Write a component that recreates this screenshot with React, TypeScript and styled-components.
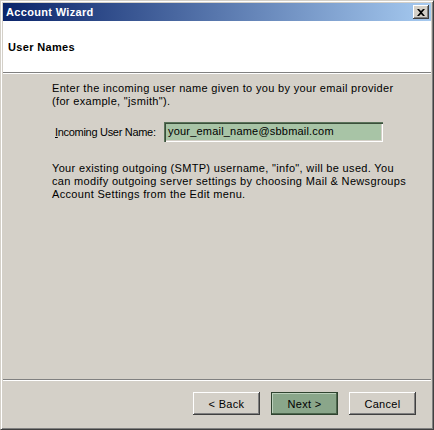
import React from 'react';
import styled, { createGlobalStyle, css } from 'styled-components';

const GlobalStyle = createGlobalStyle`
  html, body {
    margin: 0;
    padding: 0;
    background: #d4d0c8;
  }
  body {
    font-family: Tahoma, "Liberation Sans", "DejaVu Sans", sans-serif;
    font-size: 11px;
    letter-spacing: 0.33px;
    color: #000000;
    -webkit-font-smoothing: none;
  }
`;

const Window = styled.div`
  width: 434px;
  height: 430px;
  box-sizing: border-box;
  display: flex;
  flex-direction: column;
  background: #d4d0c8;
  border-top: 1px solid #d4d0c8;
  border-left: 1px solid #d4d0c8;
  border-right: 1px solid #404040;
  border-bottom: 1px solid #404040;
  box-shadow: inset 1px 1px 0 #ffffff, inset -1px -1px 0 #808080;
  padding: 2px;
`;

const TitleBar = styled.div`
  height: 18px;
  display: flex;
  align-items: center;
  justify-content: space-between;
  padding: 0 2px 0 3px;
  background: linear-gradient(to right, #0a246a, #a6caf0);
  color: #ffffff;
  font-weight: bold;
  font-size: 11px;
`;

const CloseButton = styled.button`
  width: 16px;
  height: 14px;
  padding: 0;
  margin: 0;
  background: #d4d0c8;
  border: none;
  box-shadow: inset -1px -1px 0 #404040, inset 1px 1px 0 #ffffff,
    inset -2px -2px 0 #808080;
  display: flex;
  align-items: center;
  justify-content: center;
`;

const Header = styled.div`
  height: 52px;
  background: #ffffff;
  display: flex;
  align-items: center;
  padding-left: 5px;
  font-weight: bold;
  font-size: 11px;
  border-bottom: 1px solid #808080;
  box-shadow: 0 1px 0 #ffffff;
  box-sizing: border-box;
`;

const Body = styled.div`
  flex: 1;
  padding: 8px 20px 0 49px;
  margin-top: 1px;
`;

const Paragraph = styled.p`
  margin: 0;
  line-height: 13px;
  width: 362px;
`;

const FieldRow = styled.div`
  display: flex;
  align-items: center;
  margin: 14px 0 20px 3px;
`;

const Label = styled.label`
  width: 109px;
  flex-shrink: 0;
  white-space: nowrap;
  letter-spacing: -0.3px;
  u {
    text-decoration: underline;
  }
`;

const TextField = styled.div`
  width: 219px;
  height: 20px;
  flex-shrink: 0;
  box-sizing: border-box;
  background: #a8c4a6;
  padding: 3px 4px 0 4px;
  letter-spacing: 0.2px;
  white-space: nowrap;
  box-shadow: inset 1px 1px 0 #5a735a, inset 2px 2px 0 #3a4f3a,
    inset -1px -1px 0 #ffffff, inset -2px -2px 0 #d4d0c8;
`;

const Footer = styled.div`
  height: 48px;
  border-top: 1px solid #808080;
  box-shadow: inset 0 1px 0 #ffffff;
  display: flex;
  justify-content: flex-end;
  align-items: flex-start;
  gap: 11px;
  padding: 12px 15px 0 0;
  box-sizing: border-box;
`;

const Button = styled.button<{ $primary?: boolean }>`
  width: 67px;
  height: 23px;
  font-family: inherit;
  font-size: 11px;
  letter-spacing: inherit;
  color: #000000;
  background: #d4d0c8;
  border: none;
  padding: 0;
  box-shadow: inset -1px -1px 0 #404040, inset 1px 1px 0 #ffffff,
    inset -2px -2px 0 #808080;
  ${(p) =>
    p.$primary &&
    css`
      background: #8aa68a;
      box-shadow: inset 0 0 0 1px #2f432f, inset -2px -2px 0 #4d664d,
        inset 2px 2px 0 #bcd0bc;
    `}
`;

export default function App() {
  return (
    <>
      <GlobalStyle />
      <Window>
        <TitleBar>
          <span>Account Wizard</span>
          <CloseButton aria-label="Close">
            <svg width="8" height="7" viewBox="0 0 8 7">
              <path d="M0 0h2l2 2 2-2h2L5 3.5 8 7H6L4 5 2 7H0l3-3.5z" fill="#000" />
            </svg>
          </CloseButton>
        </TitleBar>
        <Header>User Names</Header>
        <Body>
          <Paragraph>
            Enter the incoming user name given to you by your email provider
            (for example, "jsmith").
          </Paragraph>
          <FieldRow>
            <Label>
              <u>I</u>ncoming User Name:
            </Label>
            <TextField>your_email_name@sbbmail.com</TextField>
          </FieldRow>
          <Paragraph>
            Your existing outgoing (SMTP) username, "info", will be used. You
            can modify outgoing server settings by choosing Mail &amp; Newsgroups
            Account Settings from the Edit menu.
          </Paragraph>
        </Body>
        <Footer>
          <Button>&lt; Back</Button>
          <Button $primary>Next &gt;</Button>
          <Button>Cancel</Button>
        </Footer>
      </Window>
    </>
  );
}
